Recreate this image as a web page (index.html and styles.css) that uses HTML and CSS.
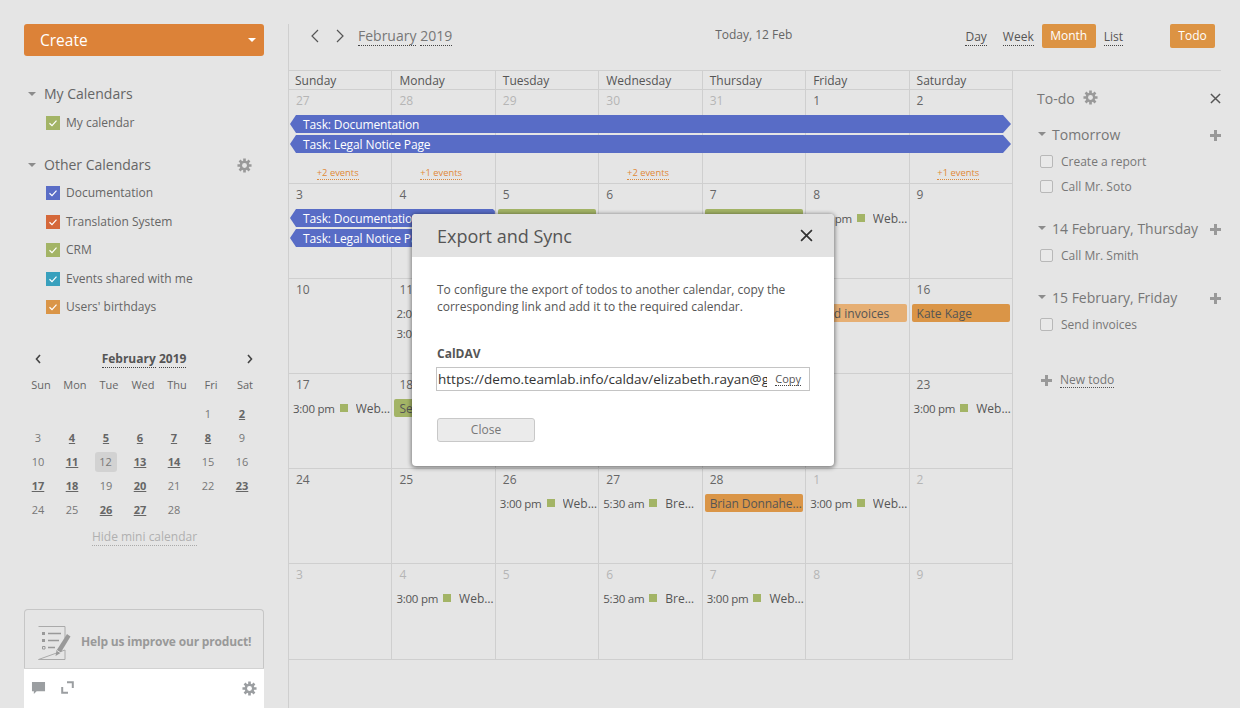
FILE: index.html
```html
<!DOCTYPE html>
<html lang="en">
<head>
<meta charset="utf-8">
<title>Calendar</title>
<link rel="stylesheet" href="styles.css">
</head>
<body>
<svg class="defs" width="0" height="0" aria-hidden="true">
  <symbol id="gear" viewBox="0 0 16 16">
    <g stroke="currentColor" stroke-width="2.8">
      <path d="M8 0.5V15.5M0.5 8H15.5M2.7 2.7L13.3 13.3M13.3 2.7L2.7 13.3"/>
    </g>
    <circle cx="8" cy="8" r="5.2" fill="currentColor"/>
    <circle cx="8" cy="8" r="2.6" fill="#e5e5e5"/>
  </symbol>
  <symbol id="gearw" viewBox="0 0 16 16">
    <g stroke="currentColor" stroke-width="2.8">
      <path d="M8 0.5V15.5M0.5 8H15.5M2.7 2.7L13.3 13.3M13.3 2.7L2.7 13.3"/>
    </g>
    <circle cx="8" cy="8" r="5.2" fill="currentColor"/>
    <circle cx="8" cy="8" r="2.6" fill="#fff"/>
  </symbol>
  <symbol id="check" viewBox="0 0 14 14">
    <path d="M3.5 7.2L6 9.6L10.5 4.6" fill="none" stroke="currentColor" stroke-width="1.2"/>
  </symbol>
  <symbol id="plus" viewBox="0 0 11 11">
    <path d="M5.5 0V11M0 5.5H11" stroke="currentColor" stroke-width="3"/>
  </symbol>
  <symbol id="close" viewBox="0 0 12 12">
    <path d="M1 1L11 11M11 1L1 11" stroke="currentColor" stroke-width="1.6" fill="none"/>
  </symbol>
</svg>

<aside class="sidebar">
  <div class="create"><span>Create</span><i class="create-caret"></i></div>

  <div class="cal-head first"><i class="caret"></i><span>My Calendars</span></div>
  <div class="cal-item"><span class="box green"><svg><use href="#check"/></svg></span>My calendar</div>

  <div class="cal-head second"><i class="caret"></i><span>Other Calendars</span><svg class="gear head-gear"><use href="#gear"/></svg></div>
  <div class="cal-item tight"><span class="box blue"><svg><use href="#check"/></svg></span>Documentation</div>
  <div class="cal-item"><span class="box red"><svg><use href="#check"/></svg></span>Translation System</div>
  <div class="cal-item"><span class="box green"><svg><use href="#check"/></svg></span>CRM</div>
  <div class="cal-item"><span class="box teal"><svg><use href="#check"/></svg></span>Events shared with me</div>
  <div class="cal-item"><span class="box orange"><svg><use href="#check"/></svg></span>Users' birthdays</div>

  <div class="mini">
    <div class="mini-head">
      <svg class="mini-arrow" viewBox="0 0 6 10"><path d="M5 1L1.5 5L5 9" fill="none" stroke="#444" stroke-width="1.6"/></svg>
      <div class="mini-title"><span>February</span> <span>2019</span></div>
      <svg class="mini-arrow" viewBox="0 0 6 10"><path d="M1 1L4.5 5L1 9" fill="none" stroke="#444" stroke-width="1.6"/></svg>
    </div>
    <div class="mini-grid">
      <span class="wd">Sun</span><span class="wd">Mon</span><span class="wd">Tue</span><span class="wd">Wed</span><span class="wd">Thu</span><span class="wd">Fri</span><span class="wd">Sat</span>
      <span></span><span></span><span></span><span></span><span></span><span class="d">1</span><span class="d b">2</span>
      <span class="d">3</span><span class="d b">4</span><span class="d b">5</span><span class="d b">6</span><span class="d b">7</span><span class="d b">8</span><span class="d">9</span>
      <span class="d">10</span><span class="d b">11</span><span class="d"><em class="today">12</em></span><span class="d b">13</span><span class="d b">14</span><span class="d">15</span><span class="d">16</span>
      <span class="d b">17</span><span class="d b">18</span><span class="d">19</span><span class="d b">20</span><span class="d">21</span><span class="d">22</span><span class="d b">23</span>
      <span class="d">24</span><span class="d">25</span><span class="d b">26</span><span class="d b">27</span><span class="d">28</span><span></span><span></span>
    </div>
    <div class="mini-hide"><span>Hide mini calendar</span></div>
  </div>

  <div class="foot">
    <div class="help">
      <svg class="help-icon" viewBox="0 0 33 34" fill="none">
        <path d="M0.5 0.5H27V12M27 24V33.5H0.5Z" stroke="#aaa"/>
        <path d="M4 6h3v3H4zM4 13h3v3H4z" fill="#999"/>
        <path d="M4.5 20.5h2.5v2.5H4.5z" stroke="#999"/>
        <path d="M10 7.5H23M10 14.5H21M10 21.5H17" stroke="#999" stroke-width="1.6"/>
        <path d="M29 8L32.500 10.500L22.500 27L17.500 30L18.500 24.500Z" fill="#999"/>
        <path d="M19 24.500L23 27" stroke="#e5e5e5"/>
      </svg>
      <span>Help us improve our product!</span>
    </div>
    <div class="tools">
      <svg class="tool" viewBox="0 0 16 15"><path d="M1 1H15V11H6L3 14V11H1Z" fill="#9b9ea1"/></svg>
      <svg class="tool expand" viewBox="0 0 13 13" fill="none"><path d="M6 1.2H11.800V7M1.200 6V11.800H7" stroke="#9b9ea1" stroke-width="2"/></svg>
      <svg class="gear tool-gear"><use href="#gearw"/></svg>
    </div>
  </div>
</aside>

<main class="main">
  <header class="top">
    <svg class="nav-arrow first" viewBox="0 0 9 14"><path d="M8 1L2 7L8 13" fill="none" stroke="#555" stroke-width="1.2"/></svg>
    <svg class="nav-arrow" viewBox="0 0 9 14"><path d="M1 1L7 7L1 13" fill="none" stroke="#555" stroke-width="1.2"/></svg>
    <div class="month-title"><span>February</span> <span>2019</span></div>
    <div class="today-label">Today, 12 Feb</div>
    <div class="views">
      <span class="view">Day</span>
      <span class="view">Week</span>
      <span class="view-active">Month</span>
      <span class="view">List</span>
    </div>
    <div class="todo-btn">Todo</div>
  </header>

  <div class="content">
    <section class="calendar">
      <div class="dow">
        <div>Sunday</div><div>Monday</div><div>Tuesday</div><div>Wednesday</div><div>Thursday</div><div>Friday</div><div>Saturday</div>
      </div>

      <div class="week w-first">
        <div class="cell c1 off">27</div><div class="cell c2 off">28</div><div class="cell c3 off">29</div><div class="cell c4 off">30</div><div class="cell c5 off">31</div><div class="cell c6">1</div><div class="cell c7">2</div>
        <div class="task full r2">Task: Documentation</div>
        <div class="task full r3">Task: Legal Notice Page</div>
        <div class="more c1"><span>+2 events</span></div>
        <div class="more c2"><span>+1 events</span></div>
        <div class="more c4"><span>+2 events</span></div>
        <div class="more c7"><span>+1 events</span></div>
      </div>

      <div class="week">
        <div class="cell c1">3</div><div class="cell c2">4</div><div class="cell c3">5</div><div class="cell c4">6</div><div class="cell c5">7</div><div class="cell c6">8</div><div class="cell c7">9</div>
        <div class="task part r2">Task: Documentation</div>
        <div class="task part r3">Task: Legal Notice Page</div>
        <div class="ev green-ev c3 r2"></div>
        <div class="ev green-ev c5 r2"></div>
        <div class="timed c6 r2"><span class="t">3:00 pm</span><i class="sq"></i><span class="n">Webinar</span></div>
      </div>

      <div class="week">
        <div class="cell c1">10</div><div class="cell c2">11</div><div class="cell c3">12</div><div class="cell c4">13</div><div class="cell c5">14</div><div class="cell c6">15</div><div class="cell c7">16</div>
        <div class="timed c2 r2"><span class="t">2:00 pm</span><i class="sq"></i><span class="n">Webinar</span></div>
        <div class="timed c2 r3"><span class="t">3:00 pm</span><i class="sq"></i><span class="n">Webinar</span></div>
        <div class="ev light-ev c6 r2">Send invoices</div>
        <div class="ev orange-ev c7 r2">Kate Kage</div>
      </div>

      <div class="week">
        <div class="cell c1">17</div><div class="cell c2">18</div><div class="cell c3">19</div><div class="cell c4">20</div><div class="cell c5">21</div><div class="cell c6">22</div><div class="cell c7">23</div>
        <div class="timed c1 r2"><span class="t">3:00 pm</span><i class="sq"></i><span class="n">Webinar</span></div>
        <div class="ev green-ev c2 r2">Send invoices</div>
        <div class="timed c7 r2"><span class="t">3:00 pm</span><i class="sq"></i><span class="n">Webinar</span></div>
      </div>

      <div class="week">
        <div class="cell c1">24</div><div class="cell c2">25</div><div class="cell c3">26</div><div class="cell c4">27</div><div class="cell c5">28</div><div class="cell c6 off">1</div><div class="cell c7 off">2</div>
        <div class="timed c3 r2"><span class="t">3:00 pm</span><i class="sq"></i><span class="n">Webinar</span></div>
        <div class="timed c4 r2"><span class="t">5:30 am</span><i class="sq"></i><span class="n">Breakfast</span></div>
        <div class="ev orange-ev c5 r2 clip">Brian Donnahey-Smith</div>
        <div class="timed c6 r2"><span class="t">3:00 pm</span><i class="sq"></i><span class="n">Webinar</span></div>
      </div>

      <div class="week w-last">
        <div class="cell c1 off">3</div><div class="cell c2 off">4</div><div class="cell c3 off">5</div><div class="cell c4 off">6</div><div class="cell c5 off">7</div><div class="cell c6 off">8</div><div class="cell c7 off">9</div>
        <div class="timed c2 r2"><span class="t">3:00 pm</span><i class="sq"></i><span class="n">Webinar</span></div>
        <div class="timed c4 r2"><span class="t">5:30 am</span><i class="sq"></i><span class="n">Breakfast</span></div>
        <div class="timed c5 r2"><span class="t">3:00 pm</span><i class="sq"></i><span class="n">Webinar</span></div>
      </div>
    </section>

    <section class="todo">
      <div class="todo-head">
        <span>To-do</span><svg class="gear todo-gear"><use href="#gear"/></svg>
        <svg class="todo-close"><use href="#close"/></svg>
      </div>

      <div class="group">
        <div class="group-head"><i class="caret"></i><span>Tomorrow</span><svg class="plus"><use href="#plus"/></svg></div>
        <div class="task-row"><i class="tick"></i>Create a report</div>
        <div class="task-row"><i class="tick"></i>Call Mr. Soto</div>
      </div>
      <div class="group">
        <div class="group-head"><i class="caret"></i><span>14 February, Thursday</span><svg class="plus"><use href="#plus"/></svg></div>
        <div class="task-row"><i class="tick"></i>Call Mr. Smith</div>
      </div>
      <div class="group">
        <div class="group-head"><i class="caret"></i><span>15 February, Friday</span><svg class="plus"><use href="#plus"/></svg></div>
        <div class="task-row"><i class="tick"></i>Send invoices</div>
      </div>

      <div class="new-todo"><svg class="plus"><use href="#plus"/></svg><span>New todo</span></div>
    </section>
  </div>
</main>

<div class="modal">
  <div class="modal-head">
    <span>Export and Sync</span>
    <svg class="modal-close"><use href="#close"/></svg>
  </div>
  <div class="modal-body">
    <p class="modal-text">To configure the export of todos to another calendar, copy the corresponding link and add it to the required calendar.</p>
    <div class="modal-label">CalDAV</div>
    <div class="link-box">
      <input class="link-input" readonly value="https://demo.teamlab.info/caldav/elizabeth.rayan@gmail.com">
      <span class="copy">Copy</span>
    </div>
    <div class="close-btn">Close</div>
  </div>
</div>
</body>
</html>
```

FILE: styles.css
```css
* { box-sizing: border-box; }
html, body { margin: 0; height: 100%; }
body {
  display: flex;
  height: 708px;
  overflow: hidden;
  background: #e5e5e5;
  font-family: "Open Sans", sans-serif;
  font-size: 12px;
  color: #555;
  position: relative;
}
.defs { position: absolute; }
svg { display: block; }
i, em { font-style: normal; }

/* Sidebar */
.sidebar {
  width: 288px;
  flex: none;
  height: 708px;
  padding: 24px 24px 0;
  display: flex;
  flex-direction: column;
}
.create {
  height: 32px;
  background: #dc8238;
  border-radius: 3px;
  color: #fff;
  font-size: 15.5px;
  line-height: 30px;
  padding: 0 8px 0 16px;
  display: flex;
  justify-content: space-between;
  align-items: center;
  flex: none;
}
.create span { margin-top: -1px; }
.create-caret {
  width: 0; height: 0;
  border: 4px solid transparent;
  border-top: 4px solid #fff;
  border-bottom: 0;
}
.caret {
  width: 0; height: 0;
  border: 4px solid transparent;
  border-top: 4px solid #8c8c8c;
  border-bottom: 0;
  flex: none;
}
.cal-head {
  display: flex;
  align-items: center;
  font-size: 14px;
  line-height: 20px;
  color: #666;
  padding-left: 4px;
}
.cal-head.first { margin-top: 28px; }
.cal-head.second { margin-top: 21px; }
.cal-head span { margin-left: 8px; }
.head-gear { margin-left: auto; margin-right: 12px; }
.gear { width: 15px; height: 15px; color: #999; }
.cal-item {
  display: flex;
  align-items: center;
  height: 14px;
  margin-top: 14.5px;
  padding-left: 22px;
  line-height: 14px;
  color: #666;
}
.cal-head + .cal-item { margin-top: 12px; }
.cal-item + .cal-head { margin-top: 25px; }
.cal-head + .cal-item.tight { margin-top: 11px; }
.box {
  width: 14px; height: 14px;
  margin-right: 6px;
  color: #fff;
  flex: none;
}
.box svg { width: 14px; height: 14px; }
.box.green { background: #a3b466; }
.box.blue { background: #5a6dc6; }
.box.red { background: #d5683a; }
.box.teal { background: #38a0bd; }
.box.orange { background: #da9547; }

/* Mini calendar */
.mini { margin-top: 34px; margin-left: -3px; }
.mini-head {
  display: flex;
  justify-content: space-between;
  align-items: center;
  height: 22px;
  padding: 0 11px 0 14px;
}
.mini-arrow { width: 6px; height: 10px; }
.mini-title { font-weight: 700; color: #555; font-size: 12px; line-height: 16px; }
.mini-title span { border-bottom: 1px dotted #444; }
.mini-grid {
  display: grid;
  grid-template-columns: repeat(7, 34px);
  grid-template-rows: 26px;
  grid-auto-rows: 24px;
  margin-top: 6px;
  text-align: center;
  font-size: 11px;
  line-height: 24px;
}
.wd { color: #666; padding-left: 6px; line-height: 18px; }
.d { color: #777; }
.d.b { font-weight: 700; text-decoration: underline; color: #666; }
.today {
  display: inline-block;
  vertical-align: top;
  width: 22px;
  height: 20px;
  margin: 2px 0 0 -1px;
  line-height: 20px;
  background: #d2d2d2;
  border-radius: 3px;
}
.mini-hide { text-align: center; margin-top: 7px; padding-left: 4px; color: #b0b0b0; line-height: 15px; }
.mini-hide span { border-bottom: 1px dotted #aaa; }

/* Sidebar foot */
.foot { margin-top: auto; flex: none; }
.help {
  height: 59px;
  border: 1px solid #c6c6c6;
  border-bottom: 0;
  border-radius: 4px 4px 0 0;
  display: flex;
  align-items: center;
  padding: 4px 0 0 13px;
  font-weight: 700;
  color: #999;
  white-space: nowrap;
  letter-spacing: -0.18px;
}
.help-icon { width: 33px; height: 34px; margin: 4px 10px 0 0; flex: none; }
.tools {
  height: 40px;
  background: #fff;
  border-top: 1px solid #d2d2d2;
  display: flex;
  align-items: flex-start;
  padding: 12px 7px 0 7px;
}
.tool { width: 15px; height: 14px; }
.expand { width: 13px; height: 13px; margin-left: 15px; }
.tool-gear { margin-left: auto; color: #9b9ea1; }

/* Main */
.main {
  width: 933px;
  flex: none;
  margin-top: 24px;
  border-left: 1px solid #cfcfcf;
  display: flex;
  flex-direction: column;
}
.top {
  height: 47px;
  flex: none;
  border-bottom: 1px solid #cfcfcf;
  display: flex;
  align-items: flex-start;
  padding-right: 6px;
}
.nav-arrow { width: 9px; height: 14px; margin-top: 5px; margin-left: 17px; flex: none; }
.nav-arrow.first { margin-left: 21px; }
.month-title { margin-left: 13px; font-size: 14px; line-height: 19px; color: #777; margin-top: 2px; }
.month-title span { border-bottom: 1px dotted #444; display: inline-block; }
.today-label { margin-left: 263px; line-height: 20px; margin-top: 1px; color: #666; white-space: nowrap; }
.views { margin-left: auto; display: flex; align-items: flex-start; }
.view { border-bottom: 1px dotted #444; margin-top: 4px; line-height: 17px; color: #555; margin-right: 16px; }
.view-active, .todo-btn {
  height: 24px;
  line-height: 24px;
  background: #dc9343;
  color: #fff;
  border-radius: 2px;
  text-align: center;
}
.view-active { width: 54px; margin-left: -8px; margin-right: 8px; }
.view-active + .view { margin-right: 0; }
.todo-btn { width: 45px; margin-left: 47px; }

.content { display: flex; flex: 1; align-items: flex-start; }
.calendar { width: 724px; flex: none; }
.dow {
  display: grid;
  grid-template-columns: repeat(7, minmax(0, 1fr));
  height: 19px;
  border-bottom: 1px solid #cfcfcf;
}
.dow div {
  border-right: 1px solid #cfcfcf;
  padding-left: 7px;
  line-height: 20px;
  color: #555;
}
.dow div:first-child { padding-left: 6px; }
.week {
  display: grid;
  grid-template-columns: repeat(7, minmax(0, 1fr));
  grid-template-rows: 25px 20px 20px 1fr;
  height: 95px;
  border-bottom: 1px solid #cfcfcf;
}
.w-first { height: 94px; }
.w-last { height: 96px; }
.cell {
  grid-row: 1 / -1;
  border-right: 1px solid #cfcfcf;
  padding: 2px 0 0 7px;
  line-height: 17px;
  color: #666;
}
.cell.off { color: #b5b5b5; }
.c1 { grid-column: 1; }
.c2 { grid-column: 2; }
.c3 { grid-column: 3; }
.c4 { grid-column: 4; }
.c5 { grid-column: 5; }
.c6 { grid-column: 6; }
.c7 { grid-column: 7; }
.r2 { grid-row: 2; }
.r3 { grid-row: 3; }
.task, .ev {
  height: 18px;
  line-height: 20px;
  white-space: nowrap;
  overflow: hidden;
}
.task {
  background: #586cc6;
  color: #fff;
  padding-left: 13px;
  letter-spacing: -0.12px;
}
.task.full {
  grid-column: 1 / -1;
  margin: 0 2px 0 1px;
  clip-path: polygon(6px 0, calc(100% - 8px) 0, 100% 50%, calc(100% - 8px) 100%, 6px 100%, 0 50%);
}
.task.part {
  grid-column: 1 / 3;
  margin: 0 1px 0 1px;
  clip-path: polygon(6px 0, calc(100% - 2px) 0, 100% 2px, 100% 100%, 6px 100%, 0 50%);
}
.ev {
  margin: 0 3px 0 2px;
  padding-left: 5px;
  border-radius: 2px;
  color: #555;
}
.clip { text-overflow: ellipsis; letter-spacing: -0.12px; }
.green-ev { background: #a3b466; }
.orange-ev { background: #da9547; }
.light-ev { background: #e6af74; }
.more {
  grid-row: 4;
  align-self: end;
  text-align: center;
  font-size: 9.4px;
  line-height: 12px;
  color: #e08a3a;
  margin-bottom: 3px;
  padding-right: 6px;
}
.more span { border-bottom: 1px dotted #e08a3a; display: inline-block; }
.timed {
  display: flex;
  align-items: center;
  height: 18px;
  padding: 0 2px 0 4px;
  white-space: nowrap;
  color: #555;
  min-width: 0;
}
.t { flex: none; font-size: 11.5px; letter-spacing: -0.25px; }
.sq { width: 8px; height: 8px; background: #a3b466; margin: 0 8px 0 5px; flex: none; }
.n { flex: 1; min-width: 0; overflow: hidden; text-overflow: ellipsis; }

/* Todo */
.todo { flex: 1; padding-left: 24px; color: #777; min-width: 0; }
.todo-head {
  display: flex;
  align-items: center;
  height: 20px;
  margin-top: 17px;
  font-size: 14px;
  color: #777;
}
.todo-gear { margin-left: 8px; margin-top: -1px; }
.todo-close { width: 11px; height: 11px; margin-left: auto; color: #555; }
.group { margin-bottom: 19px; }
.todo-head + .group { margin-top: 16px; }
.group-head {
  display: flex;
  align-items: center;
  height: 20px;
  font-size: 14px;
  padding-left: 1px;
  color: #777;
  white-space: nowrap;
}
.group-head span { margin-left: 6px; }
.plus { width: 11px; height: 11px; color: #999; flex: none; }
.group-head .plus { margin-left: auto; margin-top: 2px; }
.task-row {
  display: flex;
  align-items: center;
  height: 25px;
  padding-left: 3px;
  color: #777;
}
.group-head + .task-row { margin-top: 5px; }
.tick {
  width: 13px; height: 13px;
  border: 1px solid #b8b8b8;
  border-radius: 2px;
  background: #e9e9e9;
  margin-right: 8px;
  flex: none;
}
.new-todo { display: flex; align-items: center; margin-top: 35px; padding-left: 4px; color: #777; }
.new-todo span { margin-left: 8px; border-bottom: 1px dotted #555; line-height: 15px; }

/* Modal */
.modal {
  position: absolute;
  left: 412px;
  top: 214px;
  width: 422px;
  height: 252px;
  background: #fff;
  border-radius: 4px;
  box-shadow: 0 1px 4px 1px rgba(0,0,0,.45);
  overflow: hidden;
}
.modal-head {
  height: 43px;
  background: #e2e2e2;
  display: flex;
  align-items: center;
  justify-content: space-between;
  padding: 0 21px 0 25px;
  font-size: 18px;
  color: #555;
}
.modal-close { width: 13px; height: 13px; color: #333; }
.modal-body { padding: 24px 24px 0 25px; }
.modal-text { margin: 0; line-height: 17px; color: #555; width: 370px; }
.modal-label { margin-top: 30px; font-weight: 700; color: #555; line-height: 17px; }
.link-box {
  margin: 5px 0 0 -1px;
  width: 374px;
  height: 24px;
  border: 1px solid #c4c4c4;
  display: flex;
  align-items: center;
  background: #fff;
}
.link-input {
  flex: 1;
  min-width: 0;
  height: 22px;
  border: 0;
  outline: 0;
  padding: 0 0 0 1px;
  margin-right: 8px;
  font-family: "Open Sans", sans-serif;
  font-size: 13.5px;
  color: #333;
  background: transparent;
}
.copy { font-size: 11px; border-bottom: 1px dotted #444; line-height: 13px; margin-right: 8px; color: #555; }
.close-btn {
  margin-top: 27px;
  width: 98px;
  height: 24px;
  line-height: 22px;
  background: #ebebeb;
  border: 1px solid #c8c8c8;
  border-radius: 3px;
  text-align: center;
  color: #777;
}
```
